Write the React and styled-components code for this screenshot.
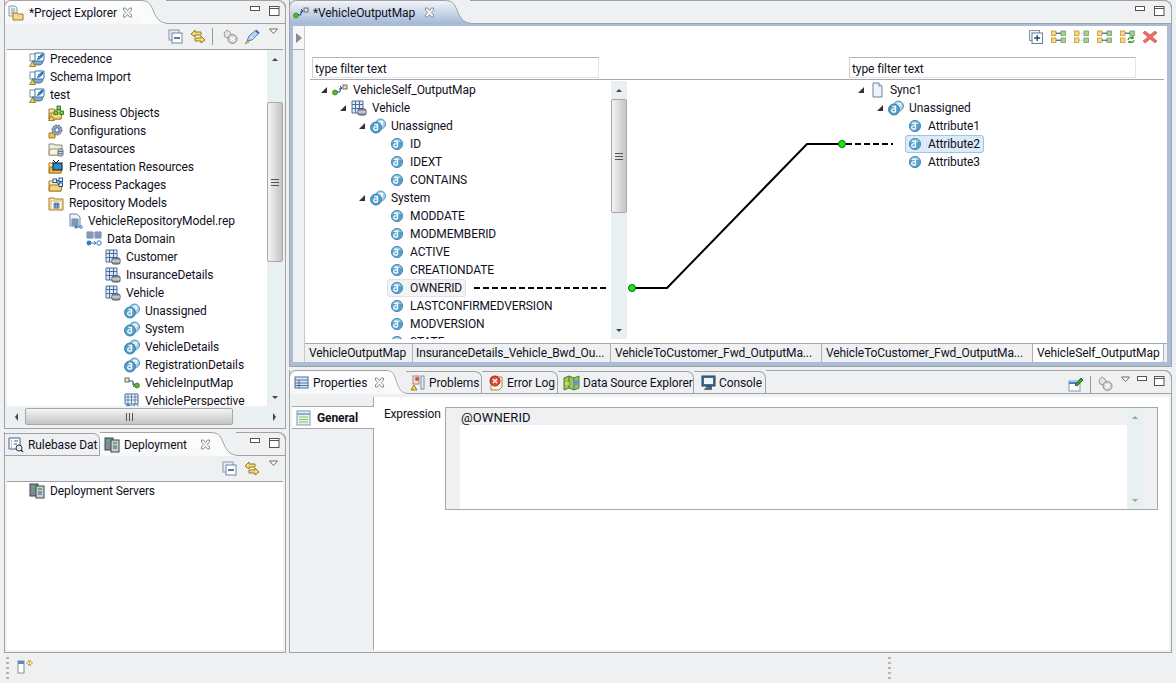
import React from 'react';
import styled, { createGlobalStyle } from 'styled-components';

const Global = createGlobalStyle`
  html, body { margin: 0; padding: 0; background: #eff0f2; }
  * { box-sizing: border-box; }
  body { font: 12px Roboto, "Liberation Sans", sans-serif; letter-spacing: -0.1px; color: #10101c; }
`;

const LINE = '#a0a2a4';
const BLUE = '#a9bdd8';

const Page = styled.div`
  width: 1176px;
  height: 683px;
  display: flex;
  flex-direction: column;
  overflow: hidden;
  background: #eff0f2;
`;

const Workbench = styled.div`
  height: 653px;
  display: grid;
  grid-template-columns: 282px 883px;
  column-gap: 3px;
  padding-left: 4px;
`;

const Column = styled.div`
  display: grid;
  grid-template-rows: ${p => p.$rows};
  row-gap: 3px;
  min-height: 0;
`;

const Panel = styled.section`
  display: flex;
  flex-direction: column;
  min-height: 0;
  border: 1px solid ${LINE};
  border-top: 0;
  border-top-right-radius: 8px;
  background: #eff0f2;
`;

const Strip = styled.div`
  display: flex;
  height: 24px;
  flex: none;
  margin-left: -1px;
  margin-right: -1px;
`;

const Tab = styled.div`
  display: flex;
  align-items: center;
  flex: none;
  width: ${p => p.$w}px;
  padding-left: ${p => p.$pad ?? 4}px;
  gap: ${p => p.$gap ?? 5}px;
  white-space: nowrap;
  border-top: 1px solid ${LINE};
  border-left: ${p => (p.$first ? `1px solid ${LINE}` : '0')};
  border-top-left-radius: ${p => (p.$first ? 7 : 0)}px;
  background: ${p => (p.$blue ? 'linear-gradient(#f2f5f9, #a3b9d6)' : 'linear-gradient(#ffffff, #f6f7f8)')};
`;

const TabClose = styled.span`
  display: block;
  margin-left: ${p => p.$gap || 0}px;
`;

const OtherTab = styled.div`
  display: flex;
  align-items: center;
  flex: none;
  width: ${p => p.$w}px;
  padding-left: ${p => p.$pad ?? 4}px;
  gap: ${p => p.$gap ?? 4}px;
  white-space: nowrap;
  margin-top: 1px;
  border-top: 1px solid ${LINE};
  border-right: 1px solid ${LINE};
  border-bottom: 1px solid ${LINE};
  border-top-right-radius: 7px;
  border-left: ${p => (p.$first ? `1px solid ${LINE}` : '0')};
`;

const StripRest = styled.div`
  flex: 1;
  display: flex;
  justify-content: flex-end;
  align-items: flex-start;
  gap: ${p => p.$gap ?? 8}px;
  padding-top: 5px;
  padding-right: ${p => p.$right ?? 6}px;
  border-top: 1px solid ${LINE};
  border-right: 1px solid ${LINE};
  border-bottom: 1px solid ${LINE};
  border-top-right-radius: 8px;
`;

const ToolBar = styled.div`
  display: flex;
  flex: none;
  justify-content: flex-end;
  align-items: center;
  height: 26px;
  gap: 6px;
  padding-right: 4px;
  border-bottom: 1px solid ${LINE};
  margin: 0 2px;
`;

const Separator = styled.span`
  width: 1px;
  height: 17px;
  background: #9a9a9a;
  margin-right: ${p => p.$after || 0}px;
`;

const MenuSlot = styled.span`
  display: block;
  margin-left: ${p => p.$left ?? 3}px;
  margin-top: ${p => p.$top ?? -11}px;
`;

const Inner = styled.div`
  flex: 1;
  display: flex;
  min-height: 0;
  margin: 0 2px 2px;
  background: #fff;
`;

const TreeWrap = styled.div`
  flex: 1;
  min-width: 0;
  overflow: hidden;
  background: #fff;
`;

const Row = styled.div`
  display: flex;
  align-items: center;
  height: 18px;
  padding-left: ${p => p.$x}px;
  white-space: nowrap;
`;

const Expander = styled.span`
  flex: none;
  display: flex;
  align-items: center;
  width: 11px;
`;

const Tri = styled.i`
  display: block;
  width: 0;
  height: 0;
  border-style: solid;
  border-width: 0 0 6px 6px;
  border-color: transparent transparent #333 transparent;
`;

const Label = styled.span`
  display: flex;
  align-items: center;
  gap: 5px;
  height: 18px;
  margin-left: ${p => (p.$sel ? -2 : 0)}px;
  padding: ${p => (p.$sel ? '0 3px 0 1px' : '0')};
  border: ${p => (p.$sel === 'blue' ? '1px solid #9cc5e6' : p.$sel ? '1px solid #dfe3e4' : '0')};
  border-radius: 3px;
  background: ${p => (p.$sel === 'blue' ? '#dcebf8' : p.$sel ? '#f2f4f4' : 'transparent')};
`;

const VBar = styled.div`
  flex: none;
  width: ${p => p.$w || 16}px;
  display: flex;
  flex-direction: column;
  background: #e9f0f2;
`;

const HBar = styled.div`
  flex: none;
  display: flex;
  align-items: stretch;
  height: 17px;
  margin: 0 2px 3px;
  background: #e9f0f2;
`;

const ArrowBox = styled.div`
  flex: none;
  width: ${p => (p.$h ? '18px' : 'auto')};
  height: ${p => (p.$h ? 'auto' : '18px')};
  display: flex;
  align-items: center;
  justify-content: center;
`;

const Arrow = styled.i`
  display: block;
  width: 0;
  height: 0;
  border-style: solid;
  border-color: transparent;
  border-width: ${p => ((p.$d === 'u' || p.$d === 'd') ? '3.5px 3.5px' : '4px 3.5px')};
  ${p => p.$d === 'u' && `border-top-width: 0; border-bottom-color: ${p.$dim ? '#a0a0a0' : '#444'};`}
  ${p => p.$d === 'd' && `border-bottom-width: 0; border-top-color: ${p.$dim ? '#a0a0a0' : '#444'};`}
  ${p => p.$d === 'l' && 'border-left-width: 0; border-right-color: #444;'}
  ${p => p.$d === 'r' && 'border-right-width: 0; border-left-color: #444;'}
`;

const Track = styled.div`
  flex: 1;
  min-width: 0;
  min-height: 0;
  display: flex;
  flex-direction: ${p => (p.$h ? 'row' : 'column')};
`;

const Thumb = styled.div`
  flex: none;
  display: flex;
  align-items: center;
  justify-content: center;
  margin-${p => (p.$h ? 'left' : 'top')}: ${p => p.$at}px;
  ${p => (p.$h ? 'width' : 'height')}: ${p => p.$len}px;
  border: 1px solid #a8a8a8;
  border-radius: 2px;
  background: ${p => (p.$h ? 'linear-gradient(#f4f4f4, #c4c4c4)' : 'linear-gradient(90deg, #f4f4f4, #c4c4c4)')};
`;

const Grip = styled.span`
  width: ${p => (p.$h ? 7 : 8)}px;
  height: ${p => (p.$h ? 8 : 7)}px;
  background: ${p => (p.$h
    ? 'repeating-linear-gradient(90deg, #555 0 1px, transparent 1px 3px)'
    : 'repeating-linear-gradient(#555 0 1px, transparent 1px 3px)')};
`;

const Svg = styled.svg`
  display: block;
  flex: none;
`;

const EditorBody = styled.div`
  flex: 1;
  display: flex;
  min-height: 0;
  border-style: solid;
  border-color: ${BLUE};
  border-width: 2px 4px 4px 3px;
  background: #fff;
`;

const Palette = styled.div`
  flex: none;
  width: 12px;
  display: flex;
  flex-direction: column;
  background: #eff0f2;
  border-right: 1px solid #c8c8c8;
`;

const PaletteHead = styled.div`
  height: 24px;
  display: flex;
  align-items: center;
  justify-content: center;
  border-bottom: 1px solid #b0b0b0;
  background: #f6f6f7;
`;

const PaletteArrow = styled.i`
  display: block;
  width: 0;
  height: 0;
  border-style: solid;
  border-width: 5px 0 5px 6px;
  border-color: transparent transparent transparent #8a8a8a;
`;

const MapColumn = styled.div`
  flex: 1;
  min-width: 0;
  display: flex;
  flex-direction: column;
`;

const MapTools = styled.div`
  flex: none;
  height: 31px;
  display: flex;
  justify-content: flex-end;
  padding: 4px 10px 0 0;
  gap: 8px;
`;

const FilterRow = styled.div`
  flex: none;
  height: 23px;
  display: grid;
  grid-template-columns: 287px 287px;
  column-gap: 250px;
  margin: 0 3px 0 5px;
  padding-left: 2px;
  border-bottom: 1px solid #a8a8a8;
`;

const FilterBox = styled.div`
  height: 21px;
  padding: 1px 2px 0;
  line-height: 21px;
  border: 1px solid #e0e6e8;
  border-top-color: #b4b4b4;
  border-left-color: #cfcfcf;
  background: #fff;
`;

const MapArea = styled.div`
  position: relative;
  flex: 1;
  min-height: 0;
  display: grid;
  grid-template-columns: 322px 222px 1fr;
  padding-top: 1px;
`;

const MapPane = styled.div`
  display: flex;
  min-width: 0;
  height: 258px;
  overflow: hidden;
`;

const Wires = styled.svg`
  position: absolute;
  left: 0;
  top: 0;
  pointer-events: none;
`;

const SheetTabs = styled.div`
  flex: none;
  height: 19px;
  display: flex;
  background: #eff0f2;
  border-top: 1px solid #a8a8a8;
`;

const SheetTab = styled.div`
  width: ${p => p.$w}px;
  flex: none;
  overflow: hidden;
  padding-left: ${p => p.$pad ?? 4}px;
  line-height: 18px;
  white-space: nowrap;
  border-right: 1px solid #b0b0b0;
  background: ${p => (p.$active ? '#fff' : 'transparent')};
  border-bottom-right-radius: ${p => (p.$active ? 3 : 0)}px;
`;

const PropsBody = styled.div`
  flex: 1;
  display: flex;
  min-height: 0;
  margin: 3px 2px 2px 2px;
  background: #fff;
`;

const Sidebar = styled.div`
  flex: none;
  width: 82px;
  padding-top: 9px;
  background: #eff0f2;
  border-right: 1px solid #a8a8a8;
`;

const SideTab = styled.div`
  height: 23px;
  margin-right: -1px;
  display: flex;
  align-items: center;
  gap: 5px;
  padding-left: 4px;
  font-weight: 700;
  background: #fff;
  border-top: 1px solid #a8a8a8;
  border-bottom: 1px solid #a8a8a8;
`;

const PropsForm = styled.div`
  flex: 1;
  display: flex;
  align-items: flex-start;
  padding: 11px 11px 0 10px;
`;

const FieldLabel = styled.div`
  width: 61px;
  flex: none;
  line-height: 14px;
  margin-top: -1px;
  letter-spacing: -0.2px;
`;

const ExprBox = styled.div`
  flex: 1;
  height: 103px;
  margin-top: -1px;
  display: flex;
  border: 1px solid #a8a8a8;
  background: #eff0f2;
`;

const ExprRuler = styled.div`
  width: 14px;
  flex: none;
`;

const ExprText = styled.div`
  flex: 1;
  background: #fff;
`;

const ExprLine = styled.div`
  height: 17px;
  font-size: 13px;
  letter-spacing: 0.1px;
  line-height: 20px;
  padding-left: 1px;
  background: #eff0f2;
`;

const ExprGutter = styled.div`
  width: 14px;
  flex: none;
`;

const StatusBar = styled.footer`
  height: 30px;
  flex: none;
  display: flex;
  padding-left: 6px;
  align-items: flex-start;
`;

const Gripper = styled.div`
  width: 3px;
  height: 22px;
  margin-top: 4px;
  margin-left: ${p => p.$left || 0}px;
  background: repeating-linear-gradient(#b4b4b4 0 2px, transparent 2px 5px);
`;

const StatusIcon = styled.span`
  display: block;
  margin: 7px 0 0 8px;
`;

/* icons */

const I = ({ w = 16, h = 16, vb, children }) => (
  <Svg width={w} height={h} viewBox={vb || `0 0 ${w} ${h}`}>{children}</Svg>
);

const Warn = () => <path d="M3.5 10.5L6.5 15.5H.5Z" fill="#f6d33c" stroke="#6b5a10" strokeWidth=".7" />;

const ProjectIcon = () => (
  <I>
    <rect x="1" y="3" width="7" height="7" fill="#fff" stroke="#7d8ea5" />
    <path d="M6 2h9v7c-2 3-6 4-9 2z" fill="#fff" stroke="#2e73ad" />
    <path d="M8 8c3 0 5-2 6-5M9 6c2 0 3-1 4-3" stroke="#2e73ad" strokeWidth="1.4" fill="none" />
    <path d="M3 10h11c0 3-2 4-5 4s-5-1-6-4z" fill="#7ea9cf" stroke="#47749e" />
    <Warn />
  </I>
);

const Folder = ({ children, fill = '#f8d27a' }) => (
  <>
    <path d="M1 4h5l1 1h6v9H1z" fill="#fbe6b2" stroke="#a17a2a" />
    <path d="M1 14l1-6h12l-1 6z" fill={fill} stroke="#a17a2a" />
    {children}
  </>
);

const BoFolder = () => (
  <I>
    <Folder />
    <g fill="#7ccf58" stroke="#1f6e1a" strokeWidth=".8">
      <rect x="9" y="1" width="3.5" height="3.5" />
      <rect x="6" y="6" width="3.5" height="3.5" />
      <rect x="12" y="6" width="3.5" height="3.5" />
    </g>
    <Warn />
  </I>
);

const ConfigFolder = () => (
  <I>
    <path d="M1 10h6v5H1z" fill="#f5c04c" stroke="#a17a2a" />
    <circle cx="9" cy="7" r="5" fill="#8fa9c8" stroke="#41597a" strokeDasharray="2 1" />
    <circle cx="9" cy="7" r="2.2" fill="#fff" stroke="#41597a" />
  </I>
);

const DsFolder = () => (
  <I>
    <path d="M1 3h5l1 1h7v10H1z" fill="#f1ece0" stroke="#8a8a7a" />
    <path d="M1 14l1-6h12l-1 6z" fill="#fbf3dc" stroke="#a09a80" />
    <rect x="10" y="8" width="5" height="7" rx="1.5" fill="#c9d1dc" stroke="#5f6f86" />
    <path d="M10 10.5h5M10 12.7h5" stroke="#5f6f86" />
  </I>
);

const PresFolder = () => (
  <I>
    <path d="M5 1l3 3 3-3" stroke="#222" fill="none" />
    <Folder fill="#f2b93f" />
    <rect x="5" y="4" width="9" height="7" fill="#2a8fd6" stroke="#1a1a1a" />
  </I>
);

const ProcFolder = () => (
  <I>
    <Folder />
    <g fill="#eef4fa" stroke="#1c5a9a">
      <rect x="5" y="2" width="3.5" height="3.5" />
      <rect x="11" y="1" width="3.5" height="3.5" />
      <rect x="11" y="6" width="3.5" height="3.5" />
    </g>
    <path d="M8.5 3.5H11M8.5 5L11 8" stroke="#1c5a9a" fill="none" />
  </I>
);

const RepoFolder = () => (
  <I>
    <path d="M1 3h5l1 1h8v11H1z" fill="#fbe6b2" stroke="#a17a2a" />
    <rect x="3" y="6" width="11" height="8" fill="#fff" stroke="#d8b66a" />
    <path d="M6 8h5v5H6zM6 9.500h5M6 11.200h5M7.700 8v5M9.400 8v5" stroke="#3d5f92" fill="none" strokeWidth=".8" />
  </I>
);

const RepoFile = () => (
  <I>
    <path d="M3 1h7l3 3v9H3z" fill="#f2f6fb" stroke="#6d82a4" />
    <path d="M5 6h6v6H5zM5 8h6M5 10h6M7 6v6M9 6v6" stroke="#3d5f92" fill="none" strokeWidth=".8" />
    <circle cx="9" cy="14" r="1.5" fill="#2f7fc2" />
    <path d="M10 14h3" stroke="#2f7fc2" />
    <circle cx="14" cy="14" r="1.3" fill="#fff" stroke="#2f7fc2" />
  </I>
);

const DataDomain = () => (
  <I>
    <g fill="#fff" stroke="#3d5f92" strokeWidth=".8">
      <path d="M1 1h6v6H1zM1 3h6M1 5h6M3 1v6M5 1v6" />
      <path d="M9 1h6v6H9zM9 3h6M9 5h6M11 1v6M13 1v6" />
    </g>
    <circle cx="3" cy="12" r="2.400" fill="#2f7fc2" />
    <path d="M5 12h5M8 10l2 2-2 2" stroke="#2f7fc2" fill="none" />
    <circle cx="13" cy="12" r="2.200" fill="#fff" stroke="#2f7fc2" />
  </I>
);

const TableIcon = () => (
  <I>
    <path d="M1 1h11v12H1z" fill="#dfeafa" stroke="#4b6c9c" />
    <path d="M1 4.500h11M1 8.500h11M4.500 1v12M8.500 1v12" stroke="#4b6c9c" />
    <rect x="7" y="9" width="8" height="6" rx="1.500" fill="#9aa3ad" stroke="#4a4f57" />
    <path d="M7 12h8" stroke="#e8e8e8" />
  </I>
);

const LetterA = ({ x = 0, y = 0 }) => (
  <path
    transform={`translate(${x} ${y})`}
    d="M5.500 5.500h3v5.500M8.500 7.800h-2.200a1.600 1.600 0 0 0 0 3.200h2.200"
    stroke="#fff"
    strokeWidth="1.300"
    fill="none"
  />
);

const AttrGroup = () => (
  <I>
    <circle cx="10.500" cy="6" r="5" fill="#a9d3ea" stroke="#4e93bd" />
    <path d="M9 5c1-2 4-2 3.500 0s-2 1-2 3" stroke="#fff" fill="none" strokeWidth="1.300" />
    <circle cx="6" cy="9.500" r="5.500" fill="#4f9ecb" stroke="#3e82ab" />
    <LetterA x={-1} y={1} />
  </I>
);

const Attr = () => (
  <I>
    <circle cx="8" cy="8" r="5.600" fill="#559fcc" stroke="#4a8fba" />
    <path d="M3.500 6a5 5 0 0 1 9 0z" fill="#9fd0ea" />
    <LetterA />
  </I>
);

const InputMap = () => (
  <I>
    <rect x="1" y="3" width="4" height="4" fill="#f0e4cc" stroke="#6b6b6b" />
    <path d="M5 6h4v4h2M9 8l2 2-2 2" stroke="#1c4f8f" fill="none" />
    <circle cx="13" cy="10.500" r="2.400" fill="#5fb52c" stroke="#3c8a1a" />
  </I>
);

const Perspective = () => (
  <I>
    <path d="M1 1h13v10H1z" fill="#f2f6fb" stroke="#4b6c9c" />
    <path d="M1 4h13M1 7h13M4 1v10M7.500 1v10M11 1v10" stroke="#4b6c9c" strokeWidth=".8" />
    <circle cx="4" cy="13" r="2" fill="#2f7fc2" />
    <path d="M6 13h4" stroke="#2f7fc2" />
    <circle cx="12" cy="13" r="2" fill="#fff" stroke="#2f7fc2" />
  </I>
);

const OutputMap = () => (
  <I>
    <circle cx="3" cy="10.500" r="2.400" fill="#5fb52c" stroke="#3c8a1a" />
    <path d="M5 10h3V6h2M8 4l2 2-2 2" stroke="#1c4f8f" fill="none" />
    <rect x="11" y="3" width="4" height="4" fill="#f0d8cc" stroke="#6b6b6b" />
  </I>
);

const SyncDoc = () => (
  <I>
    <path d="M4 1h6l3 3v11H4z" fill="#eef4fb" stroke="#6d82a4" />
    <path d="M10 1v3h3" fill="#fff" stroke="#6d82a4" />
  </I>
);

const ServerIcon = () => (
  <I>
    <rect x="1" y="1" width="8" height="12" fill="#7f8a97" stroke="#3e4650" />
    <rect x="7" y="3" width="8" height="12" fill="#c7d0da" stroke="#3e4650" />
    <rect x="3" y="3" width="3" height="2" fill="#58c04a" />
    <rect x="9" y="5" width="4" height="2" fill="#58c04a" />
    <path d="M9 9h4M9 11h4" stroke="#555" />
  </I>
);

const RulebaseIcon = () => (
  <I>
    <path d="M1 1h11v11H1z" fill="#fff" stroke="#3d5f92" />
    <path d="M3 4h1M3 7h1M3 10h1M6 4h4M6 7h3" stroke="#3d5f92" />
    <circle cx="11" cy="11" r="3" fill="#e8eef6" stroke="#333" />
    <path d="M13 13l2 2" stroke="#333" strokeWidth="1.400" />
  </I>
);

const ExplorerIcon = () => (
  <I>
    <path d="M1 1h6l2 2v8H1z" fill="#eef2f7" stroke="#8c9bb0" />
    <path d="M3 4h4M3 6h4M3 8h3" stroke="#8c9bb0" />
    <path d="M5 8h4l1 1h5v6H5z" fill="#f6d98f" stroke="#a17a2a" />
  </I>
);

const CloseX = () => (
  <I w={11} h={11}>
    <path d="M1.500 1h2L5.500 3.800 7.500 1h2v2L7.200 5.500 9.500 8v2h-2L5.500 7.300 3.500 10h-2V8l2.300-2.500L1.500 3z" fill="#fff" stroke="#8a8a8a" />
  </I>
);

const MinBtn = () => (
  <I w={11} h={6}><rect x=".5" y=".5" width="9" height="4" fill="#fff" stroke="#555" /></I>
);

const MaxBtn = () => (
  <I w={11} h={11}>
    <rect x=".5" y=".5" width="9.500" height="9" fill="#fff" stroke="#555" />
    <path d="M.5 2.500h9.500" stroke="#555" />
  </I>
);

const MenuTri = () => (
  <I w={10} h={7}><path d="M.5 1h8L4.500 5.500z" fill="#fff" stroke="#6a6a6a" /></I>
);

const CollapseAll = () => (
  <I>
    <rect x="1" y="1" width="10" height="10" fill="#e6edf5" stroke="#8696ab" />
    <rect x="4" y="4" width="10" height="10" fill="#fff" stroke="#6a86a8" />
    <path d="M6 9h6" stroke="#1c3f70" strokeWidth="1.400" />
  </I>
);

const LinkArrows = () => (
  <I>
    <path d="M1 5l4-4v2h6v3H5v2z" fill="#f6da78" stroke="#9a7a18" />
    <path d="M15 11l-4-4v2H5v3h6v2z" fill="#f6da78" stroke="#9a7a18" />
  </I>
);

const GrayFilter = () => (
  <I>
    <path d="M2 4l3-3 3 2 1 3-3 3-3-1z" fill="#e4e4e4" stroke="#9a9a9a" />
    <circle cx="10.500" cy="10" r="4.500" fill="#d4d4d4" stroke="#8c8c8c" />
    <path d="M8.500 8l4 4m0-4l-4 4" stroke="#fff" strokeWidth="1.300" />
  </I>
);

const PinIcon = () => (
  <I>
    <path d="M15 4l-3-3-7 6-2 5 5-1z" fill="#b9d2f0" stroke="#4f7fbc" />
    <path d="M12 1.500l3 3" stroke="#2f6fc0" strokeWidth="2" />
    <path d="M3 12l-2 3 4-2z" fill="#f3c850" stroke="#a58220" strokeWidth=".7" />
    <path d="M6.500 7.500l2 2" stroke="#fff" />
  </I>
);

const PropsPin = () => (
  <I>
    <rect x="1" y="5" width="11" height="10" fill="#fff" stroke="#8696ab" />
    <path d="M1 7h11" stroke="#3b82d0" strokeWidth="2" />
    <path d="M7 9l6-7 2 2-6 6z" fill="#3fa53a" stroke="#1f6e1a" />
  </I>
);

const PropsTabIcon = () => (
  <I>
    <rect x="1" y="2" width="13" height="11" fill="#dfe9f5" stroke="#4b6c9c" />
    <path d="M1 5h13M1 8h13M1 10.500h13M5 5v8" stroke="#4b6c9c" />
  </I>
);

const GeneralIcon = () => (
  <I>
    <rect x="1" y="1" width="13" height="14" fill="#e6f3df" stroke="#6f9ccb" />
    <path d="M1 4h13" stroke="#6f9ccb" strokeWidth="1.500" />
    <path d="M3 7h9M3 9.500h9M3 12h9" stroke="#8fbf7a" />
  </I>
);

const ProblemsIcon = () => (
  <I>
    <rect x="3" y="1" width="6" height="8" fill="#f2ddd8" stroke="#a08a80" />
    <circle cx="7" cy="4" r="2" fill="#e04a3a" />
    <rect x="11" y="1" width="3" height="13" fill="#e6ebf2" stroke="#7d8ea5" />
    <path d="M4 10l3 5H1z" fill="#f6d33c" stroke="#6b5a10" strokeWidth=".7" />
  </I>
);

const ErrorLog = () => (
  <I>
    <path d="M3 2h11v10l-3 3H3z" fill="#fbf4df" stroke="#a58a4a" />
    <circle cx="7" cy="6" r="5" fill="#e34a3a" stroke="#a62a1c" />
    <path d="M5 4l4 4m0-4l-4 4" stroke="#fff" strokeWidth="1.400" />
  </I>
);

const MapIcon = () => (
  <I w={18} h={16}>
    <path d="M1 3l5-2 5 2 5-2v12l-5 2-5-2-5 2z" fill="#9dc74e" stroke="#56782a" />
    <path d="M6 1v12M11 3v12" stroke="#3f6e8f" />
    <rect x="11" y="5" width="5" height="5" fill="#5a9bc9" />
    <rect x="2" y="7" width="4" height="3" fill="#e2cf5a" />
  </I>
);

const ConsoleIcon = () => (
  <I>
    <rect x="1" y="1" width="13" height="10" fill="#3d6f9e" stroke="#2c3e55" />
    <rect x="3" y="3" width="9" height="6" fill="#eef4fa" />
    <path d="M5 12h5v2H3.500" stroke="#2c3e55" strokeWidth="1.500" fill="none" />
  </I>
);

const AddDiagram = () => (
  <I w={14} h={14}>
    <rect x=".5" y=".5" width="10" height="10" fill="#eef0f3" stroke="#8a96a6" />
    <rect x="3" y="3" width="10.500" height="10.500" fill="#fff" stroke="#5e7ea3" />
    <path d="M8.200 5v6M5.200 8h6" stroke="#1c3f70" strokeWidth="1.300" />
  </I>
);

const Node = ({ x, y, on }) => (
  <rect x={x} y={y} width="4.400" height="4.400" fill={on ? '#a6cf9a' : '#f8d98a'} stroke={on ? '#6f9f62' : '#c9962a'} strokeWidth=".8" />
);

const LinkRows = ({ dotted, refresh }) => (
  <I w={15} h={13}>
    <Node x={.5} y={1} />
    <Node x={10} y={1} on />
    <path d="M5 3.200h5" stroke={dotted ? '#aaa' : '#1c3f70'} strokeDasharray={dotted ? '1 1' : undefined} />
    <Node x={.5} y={8} />
    {refresh ? (
      <path d="M8 10a3 3 0 0 1 5-2M14 10a3 3 0 0 1-5 2M13 6v2.500h-2.500M9 14v-2.500h2.500" stroke="#2a9a2a" strokeWidth="1.200" fill="none" />
    ) : (
      <>
        <Node x={10} y={8} on />
        <path d="M5 10.200h5" stroke={dotted ? '#aaa' : '#1c3f70'} strokeDasharray={dotted ? '1 1' : undefined} />
      </>
    )}
  </I>
);

const RedCross = () => (
  <I w={14} h={14}>
    <path d="M2 1l5 4 5-4 2 2-5 4 5 4-2 2-5-4-5 4-2-2 5-4-5-4z" fill="#ee6a62" stroke="#c94a44" strokeWidth=".6" />
  </I>
);

const PerspectiveIcon = () => (
  <I w={20} h={14}>
    <rect x="1" y="1" width="6" height="12" fill="#fff" stroke="#8c8c8c" />
    <rect x="1" y="1" width="6" height="3" fill="#4a90d6" />
    <path d="M11 .5l1.500 1.500L14 .5M9 3h2m3 0h2M11 5.500L12.500 4 14 5.500" stroke="#c49a1a" strokeWidth="1.100" fill="none" />
  </I>
);

const ICON = {
  project: ProjectIcon,
  bo: BoFolder,
  config: ConfigFolder,
  ds: DsFolder,
  pres: PresFolder,
  proc: ProcFolder,
  repo: RepoFolder,
  repofile: RepoFile,
  domain: DataDomain,
  table: TableIcon,
  group: AttrGroup,
  attr: Attr,
  input: InputMap,
  persp: Perspective,
  output: OutputMap,
  doc: SyncDoc,
  server: ServerIcon,
};

const explorerRows = [
  [0, 'project', 'Precedence'],
  [0, 'project', 'Schema Import'],
  [0, 'project', 'test'],
  [1, 'bo', 'Business Objects'],
  [1, 'config', 'Configurations'],
  [1, 'ds', 'Datasources'],
  [1, 'pres', 'Presentation Resources'],
  [1, 'proc', 'Process Packages'],
  [1, 'repo', 'Repository Models'],
  [2, 'repofile', 'VehicleRepositoryModel.rep'],
  [3, 'domain', 'Data Domain'],
  [4, 'table', 'Customer'],
  [4, 'table', 'InsuranceDetails'],
  [4, 'table', 'Vehicle'],
  [5, 'group', 'Unassigned'],
  [5, 'group', 'System'],
  [5, 'group', 'VehicleDetails'],
  [5, 'group', 'RegistrationDetails'],
  [5, 'input', 'VehicleInputMap'],
  [5, 'persp', 'VehiclePerspective'],
];

const sourceRows = [
  [0, 'output', 'VehicleSelf_OutputMap', true],
  [1, 'table', 'Vehicle', true],
  [2, 'group', 'Unassigned', true],
  [3, 'attr', 'ID'],
  [3, 'attr', 'IDEXT'],
  [3, 'attr', 'CONTAINS'],
  [2, 'group', 'System', true],
  [3, 'attr', 'MODDATE'],
  [3, 'attr', 'MODMEMBERID'],
  [3, 'attr', 'ACTIVE'],
  [3, 'attr', 'CREATIONDATE'],
  [3, 'attr', 'OWNERID', false, 'gray'],
  [3, 'attr', 'LASTCONFIRMEDVERSION'],
  [3, 'attr', 'MODVERSION'],
  [3, 'attr', 'STATE'],
];

const targetRows = [
  [0, 'doc', 'Sync1', true],
  [1, 'group', 'Unassigned', true],
  [2, 'attr', 'Attribute1'],
  [2, 'attr', 'Attribute2', false, 'blue'],
  [2, 'attr', 'Attribute3'],
];

const Tree = ({ rows, base }) => (
  <TreeWrap>
    {rows.map(([level, icon, text, open, sel]) => {
      const Icon = ICON[icon];
      return (
        <Row key={text + level} $x={base + level * 19}>
          <Expander>{open && <Tri />}</Expander>
          <Label $sel={sel}>
            <Icon />
            {text}
          </Label>
        </Row>
      );
    })}
  </TreeWrap>
);

const VScroll = ({ at, len, w, dim }) => (
  <VBar $w={w}>
    <ArrowBox><Arrow $d="u" $dim={dim} /></ArrowBox>
    <Track>
      {len ? <Thumb $at={at} $len={len}><Grip /></Thumb> : null}
    </Track>
    <ArrowBox><Arrow $d="d" $dim={dim} /></ArrowBox>
  </VBar>
);

const Tail = ({ id, blue, w = 26 }) => (
  <Svg width={w} height="24" viewBox="0 0 26 24" preserveAspectRatio="none">
    {blue && (
      <defs>
        <linearGradient id={id} x1="0" y1="0" x2="0" y2="1">
          <stop offset="0" stopColor="#f2f5f9" />
          <stop offset="1" stopColor="#a3b9d6" />
        </linearGradient>
      </defs>
    )}
    <path d="M0 .5C8 .5 10 3 13 10c3 8 7 13 13 13V24H0Z" fill={blue ? `url(#${id})` : '#fafbfb'} />
    <path d="M0 .5C8 .5 10 3 13 10c3 8 7 13 13 13" fill="none" stroke={LINE} />
  </Svg>
);

export default function App() {
  return (
    <Page>
      <Global />
      <Workbench>
        <Column $rows="429px 221px">
          <Panel>
            <Strip>
              <Tab $first $w={136} $pad={3} $gap={5}>
                <ExplorerIcon />
                <span>*Project Explorer</span>
                <TabClose><CloseX /></TabClose>
              </Tab>
              <Tail />
              <StripRest $gap={8} $right={5}><MinBtn /><MaxBtn /></StripRest>
            </Strip>
            <ToolBar>
              <CollapseAll />
              <LinkArrows />
              <Separator $after={3} />
              <GrayFilter />
              <PinIcon />
              <MenuSlot><MenuTri /></MenuSlot>
            </ToolBar>
            <Inner>
              <Tree rows={explorerRows} base={11} />
              <VScroll at={34} len={160} />
            </Inner>
            <HBar>
              <ArrowBox $h><Arrow $d="l" /></ArrowBox>
              <Track $h>
                <Thumb $h $at={0} $len={208}><Grip $h /></Thumb>
              </Track>
              <ArrowBox $h><Arrow $d="r" /></ArrowBox>
            </HBar>
          </Panel>
          <Panel>
            <Strip>
              <OtherTab $first $w={96} $pad={3}>
                <RulebaseIcon />
                <span>Rulebase Dat</span>
              </OtherTab>
              <Tab $w={110} $pad={4} $gap={4}>
                <ServerIcon />
                <span>Deployment</span>
                <TabClose $gap={9}><CloseX /></TabClose>
              </Tab>
              <Tail />
              <StripRest $gap={8} $right={5}><MinBtn /><MaxBtn /></StripRest>
            </Strip>
            <ToolBar>
              <CollapseAll />
              <LinkArrows />
              <MenuSlot><MenuTri /></MenuSlot>
            </ToolBar>
            <Inner>
              <Tree rows={[[0, 'server', 'Deployment Servers']]} base={11} />
            </Inner>
          </Panel>
        </Column>

        <Column $rows="367px 283px">
          <Panel>
            <Strip>
              <Tab $first $blue $w={155} $pad={3} $gap={4}>
                <OutputMap />
                <span>*VehicleOutputMap</span>
                <TabClose $gap={5}><CloseX /></TabClose>
              </Tab>
              <Tail id="editorTab" blue />
              <StripRest $gap={8} $right={6}><MinBtn /><MaxBtn /></StripRest>
            </Strip>
            <EditorBody>
              <Palette>
                <PaletteHead><PaletteArrow /></PaletteHead>
              </Palette>
              <MapColumn>
                <MapTools>
                  <AddDiagram />
                  <LinkRows />
                  <LinkRows dotted />
                  <LinkRows />
                  <LinkRows refresh />
                  <RedCross />
                </MapTools>
                <FilterRow>
                  <FilterBox>type filter text</FilterBox>
                  <FilterBox>type filter text</FilterBox>
                </FilterRow>
                <MapArea>
                  <MapPane>
                    <Tree rows={sourceRows} base={16} />
                    <VScroll at={0} len={114} />
                  </MapPane>
                  <div />
                  <MapPane>
                    <Tree rows={targetRows} base={9} />
                  </MapPane>
                  <Wires width="862" height="263" viewBox="0 0 862 263">
                    <path d="M169 208H304" stroke="#000" strokeWidth="2" strokeDasharray="6 3" fill="none" />
                    <path d="M327 208H362L502 64H537" stroke="#000" strokeWidth="2" fill="none" />
                    <path d="M541 64H588" stroke="#000" strokeWidth="2" strokeDasharray="6 3" fill="none" />
                    <circle cx="327" cy="208" r="3.500" fill="#16e616" stroke="#0a6a0a" />
                    <circle cx="537" cy="64" r="3.500" fill="#16e616" stroke="#0a6a0a" />
                  </Wires>
                </MapArea>
                <SheetTabs>
                  <SheetTab $w={108}>VehicleOutputMap</SheetTab>
                  <SheetTab $w={198} $pad={3}>InsuranceDetails_Vehicle_Bwd_Ou...</SheetTab>
                  <SheetTab $w={211}>VehicleToCustomer_Fwd_OutputMa...</SheetTab>
                  <SheetTab $w={211}>VehicleToCustomer_Fwd_OutputMa...</SheetTab>
                  <SheetTab $w={131} $active>VehicleSelf_OutputMap</SheetTab>
                </SheetTabs>
              </MapColumn>
            </EditorBody>
          </Panel>

          <Panel>
            <Strip>
              <Tab $first $w={97} $pad={4} $gap={3}>
                <PropsTabIcon />
                <span>Properties</span>
                <TabClose $gap={4}><CloseX /></TabClose>
              </Tab>
              <Tail w={20} />
              <OtherTab $w={76} $pad={4} $gap={3}><ProblemsIcon />Problems</OtherTab>
              <OtherTab $w={76} $pad={6} $gap={3}><ErrorLog />Error Log</OtherTab>
              <OtherTab $w={136} $pad={5} $gap={2}><MapIcon />Data Source Explorer</OtherTab>
              <OtherTab $w={72} $pad={7} $gap={2}><ConsoleIcon />Console</OtherTab>
              <StripRest $gap={6} $right={6}>
                <PropsPin />
                <Separator />
                <GrayFilter />
                <MenuSlot $left={2} $top={0}><MenuTri /></MenuSlot>
                <MinBtn />
                <MaxBtn />
              </StripRest>
            </Strip>
            <PropsBody>
              <Sidebar>
                <SideTab><GeneralIcon />General</SideTab>
              </Sidebar>
              <PropsForm>
                <FieldLabel>Expression</FieldLabel>
                <ExprBox>
                  <ExprRuler />
                  <ExprText>
                    <ExprLine>@OWNERID</ExprLine>
                  </ExprText>
                  <VScroll w={16} dim />
                  <ExprGutter />
                </ExprBox>
              </PropsForm>
            </PropsBody>
          </Panel>
        </Column>
      </Workbench>
      <StatusBar>
        <Gripper />
        <StatusIcon><PerspectiveIcon /></StatusIcon>
        <Gripper $left={851} />
      </StatusBar>
    </Page>
  );
}
